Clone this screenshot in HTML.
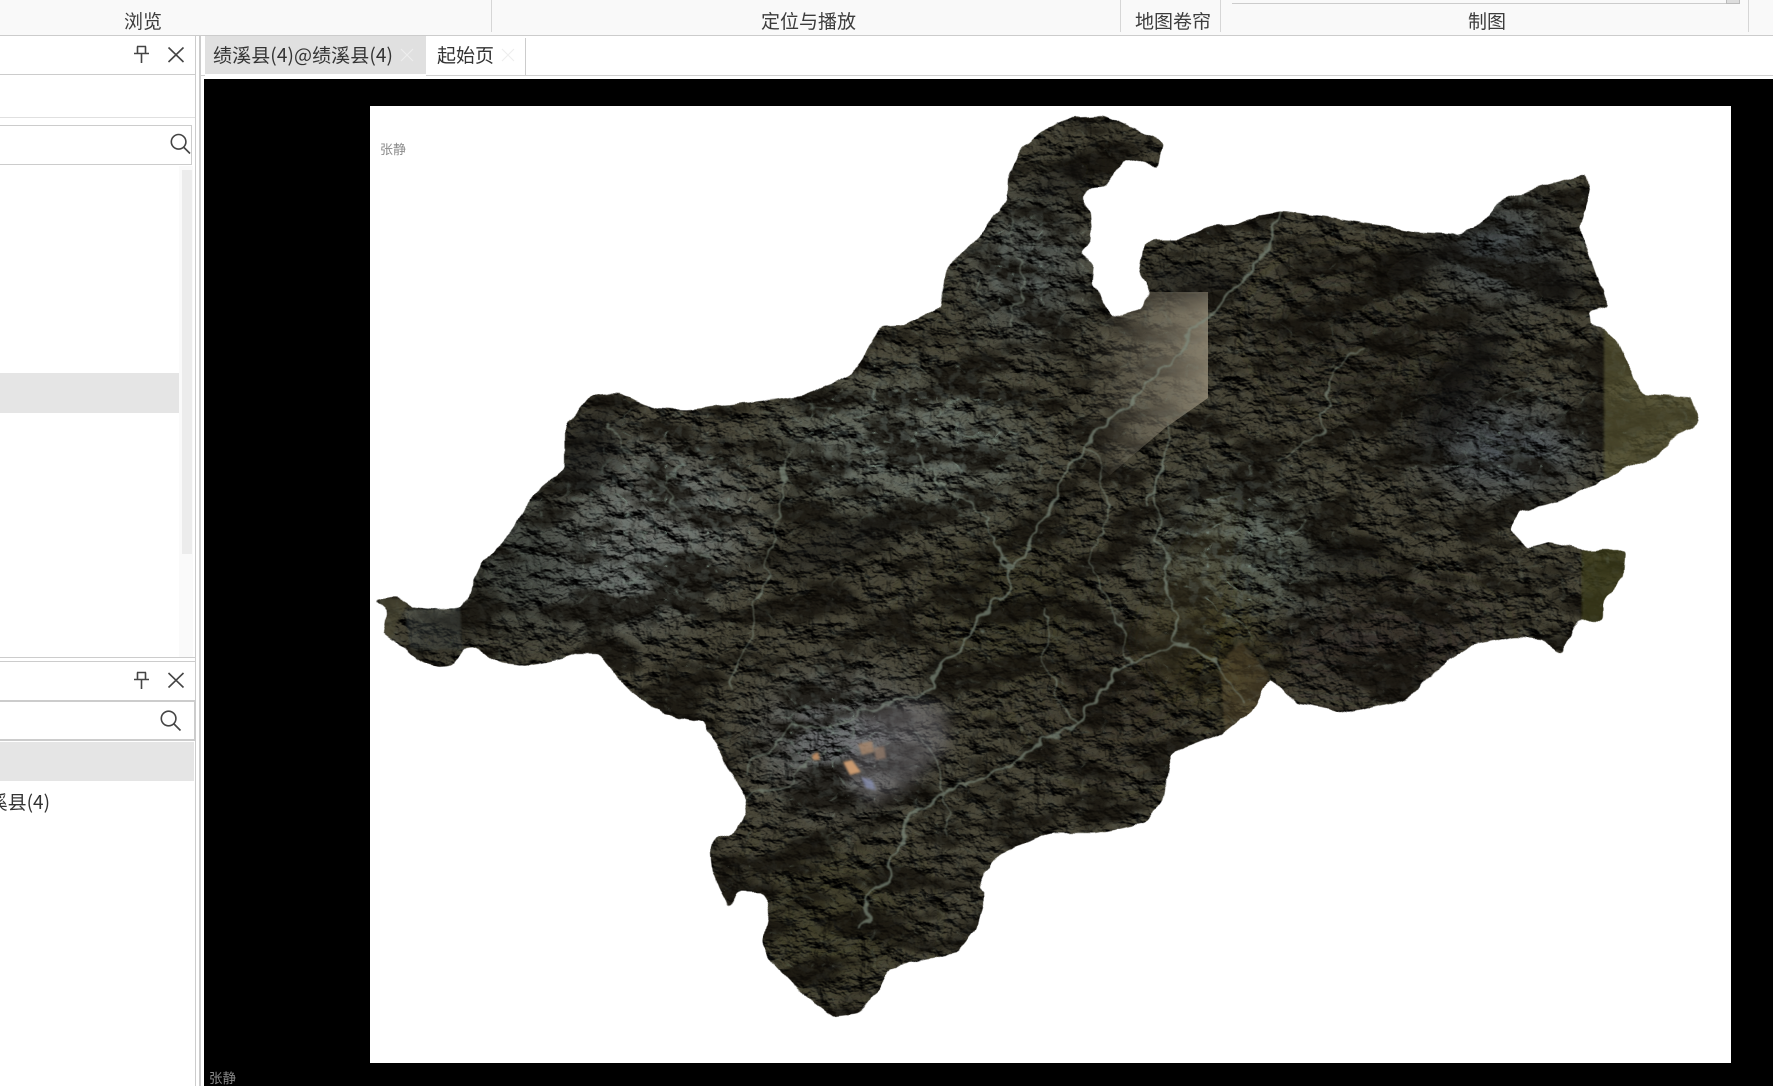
<!DOCTYPE html>
<html lang="zh"><head><meta charset="utf-8"><title>绩溪县</title>
<style>
html,body{margin:0;padding:0;width:1773px;height:1086px;overflow:hidden;background:#fff}
body{position:relative;font-family:"Liberation Sans","Noto Sans CJK SC","WenQuanYi Zen Hei",sans-serif;color:#3c3c3c}
.a{position:absolute}
.t{position:absolute;font-size:19px;line-height:26px;white-space:nowrap;font-family:"Noto Sans CJK SC","WenQuanYi Zen Hei",sans-serif;font-weight:400}
svg{position:absolute;left:0;top:0}
</style></head><body>
<div class="a" style="left:0;top:0;width:1773px;height:35px;background:#f9f9f9;border-bottom:1px solid #ccc"></div>
<div class="a" style="left:491px;top:0;width:1px;height:32px;background:#d6d6d6"></div>
<div class="a" style="left:1120px;top:0;width:1px;height:32px;background:#d6d6d6"></div>
<div class="a" style="left:1220px;top:0;width:1px;height:32px;background:#d6d6d6"></div>
<div class="a" style="left:1748px;top:0;width:1px;height:32px;background:#d6d6d6"></div>
<div class="a" style="left:1232px;top:3px;width:507px;height:1px;background:#ccc"></div>
<div class="a" style="left:1726px;top:0;width:12px;height:3px;background:#ddd;border:1px solid #bbb;border-top:0"></div>
<div class="t" style="left:124px;top:8px">浏览</div>
<div class="t" style="left:761px;top:8px">定位与播放</div>
<div class="t" style="left:1135px;top:8px">地图卷帘</div>
<div class="t" style="left:1468px;top:8px">制图</div>

<!-- left panels -->
<div class="a" style="left:0;top:74px;width:195px;height:1px;background:#ccc"></div>
<div class="a" style="left:0;top:117px;width:195px;height:1px;background:#e0e0e0"></div>
<div class="a" style="left:-2px;top:125px;width:192px;height:38px;border:1px solid #ccc"></div>
<div class="a" style="left:179px;top:166px;width:14px;height:491px;background:#fafafa"></div>
<div class="a" style="left:182px;top:170px;width:10px;height:384px;background:#ececec"></div>
<div class="a" style="left:0;top:373px;width:179px;height:40px;background:#e5e5e5"></div>
<div class="a" style="left:0;top:657px;width:195px;height:1px;background:#ccc"></div>
<div class="a" style="left:0;top:661px;width:195px;height:1px;background:#ccc"></div>
<div class="a" style="left:0;top:700px;width:195px;height:2px;background:#ccc"></div>
<div class="a" style="left:194px;top:700px;width:1px;height:41px;background:#ccc"></div>
<div class="a" style="left:0;top:739px;width:195px;height:2px;background:#ccc"></div>
<div class="a" style="left:0;top:742px;width:194px;height:39px;background:#e5e5e5"></div>
<div class="t" style="right:1723px;top:789px;color:#333">绩溪县(4)</div>
<div class="a" style="left:195px;top:35px;width:1px;height:1051px;background:#ccc"></div>
<div class="a" style="left:199px;top:35px;width:2px;height:1051px;background:#ccc"></div>

<!-- tabs -->
<div class="a" style="left:205px;top:36px;width:221px;height:38px;background:#e0e0e0"></div>
<div class="t" style="left:213px;top:42px;color:#333;letter-spacing:.1px">绩溪县(4)@绩溪县(4)</div>
<div class="a" style="left:426px;top:75px;width:1347px;height:1px;background:#d0d0d0"></div>
<div class="a" style="left:201px;top:75px;width:4px;height:1px;background:#d0d0d0"></div>
<div class="a" style="left:525px;top:38px;width:1px;height:37px;background:#ccc"></div>
<div class="t" style="left:437px;top:42px;color:#333">起始页</div>

<!-- map canvas -->
<div class="a" style="left:204px;top:79px;width:1569px;height:1007px;background:#000"></div>
<div class="a" style="left:370px;top:106px;width:1361px;height:957px;background:#fff"></div>
<div class="a" style="left:380px;top:141px;font-size:13px;line-height:16px;color:#8a8a8a;font-family:'Noto Sans CJK SC',sans-serif;font-weight:400">张静</div>
<div class="a" style="left:209px;top:1069px;font-size:13.5px;line-height:16px;color:#8a8a8a;font-family:'Noto Sans CJK SC',sans-serif;font-weight:400">张静</div>

<svg width="1773" height="1086" viewBox="0 0 1773 1086" xmlns="http://www.w3.org/2000/svg">
<defs>
<linearGradient id="tan" gradientUnits="userSpaceOnUse" x1="1085" y1="0" x2="1208" y2="0">
 <stop offset="0" stop-color="#8a8270" stop-opacity="0"/>
 <stop offset=".55" stop-color="#8a8270" stop-opacity=".5"/>
 <stop offset="1" stop-color="#938a76" stop-opacity=".85"/>
</linearGradient>
<filter id="edge" x="0" y="0" width="100%" height="100%" color-interpolation-filters="sRGB" filterUnits="userSpaceOnUse" primitiveUnits="userSpaceOnUse">
 <feGaussianBlur in="SourceGraphic" stdDeviation="2" result="s"/>
 <feTurbulence type="fractalNoise" baseFrequency="0.06" numOctaves="2" seed="4" result="n"/>
 <feDisplacementMap in="s" in2="n" scale="6" xChannelSelector="R" yChannelSelector="G" result="d"/>
 <feComponentTransfer in="d"><feFuncA type="linear" slope="5" intercept="-2"/></feComponentTransfer>
</filter>
<mask id="land" maskUnits="userSpaceOnUse" x="369" y="106" width="1362" height="957" style="mask-type:alpha">
 <polygon filter="url(#edge)" fill="#fff" points="374,600 397,597 413,606 437,609 460,607 467,600 475,577 483,560 489,557 512,530 534,493 565,467 565,427 592,395 619,393 655,408 686,410 753,402 806,395 851,375 882,327 905,325 940,307 945,270 985,230 995,215 1007,200 1008,177 1020,150 1043,130 1070,118 1103,116 1130,128 1163,142 1158,167 1140,162 1127,158 1113,175 1105,187 1090,188 1082,197 1090,213 1092,240 1080,253 1095,263 1093,283 1108,310 1110,318 1143,308 1150,290 1140,273 1145,243 1153,240 1177,240 1213,226 1233,225 1260,215 1283,211 1330,217 1378,225 1415,232 1458,234 1481,225 1500,201 1533,189 1585,174 1590,194 1580,229 1597,277 1609,306 1590,312 1592,325 1606,329 1618,343 1642,394 1691,398 1700,422 1670,439 1660,456 1637,463 1609,477 1561,501 1519,512 1510,529 1528,548 1552,542 1580,550 1625,550 1623,577 1604,601 1604,620 1578,620 1560,655 1543,639 1514,637 1472,646 1439,667 1406,700 1350,713 1297,703 1270,678 1253,710 1224,733 1172,753 1162,803 1145,823 1096,833 1052,833 1012,848 991,862 979,887 985,895 976,930 958,953 922,960 891,968 878,990 860,1013 833,1017 802,993 770,960 762,943 770,907 764,893 739,892 729,908 721,893 712,870 710,847 717,838 735,833 746,813 744,797 730,770 720,752 707,730 703,723 680,718 663,713 637,697 617,677 608,663 598,654 577,654 547,662 523,666 500,663 488,657 475,647 465,648 458,658 450,666 440,667 423,663 410,655 402,647 383,633 387,612"/>
</mask>
<filter id="b30" x="-30%" y="-30%" width="160%" height="160%"><feGaussianBlur stdDeviation="26"/></filter>
<filter id="b12" x="-30%" y="-30%" width="160%" height="160%"><feGaussianBlur stdDeviation="12"/></filter>
<filter id="b6" x="-20%" y="-20%" width="140%" height="140%"><feGaussianBlur stdDeviation="7"/></filter>
<filter id="b1" x="-5%" y="-5%" width="110%" height="110%"><feGaussianBlur stdDeviation="1"/></filter>
<filter id="rv" filterUnits="userSpaceOnUse" x="369" y="106" width="1362" height="957" color-interpolation-filters="sRGB">
 <feTurbulence type="fractalNoise" baseFrequency="0.035" numOctaves="3" seed="9" result="n"/>
 <feDisplacementMap in="SourceGraphic" in2="n" scale="26" xChannelSelector="R" yChannelSelector="G"/>
 <feGaussianBlur stdDeviation="0.7"/>
</filter>
<filter id="relief" x="0" y="0" width="100%" height="100%" color-interpolation-filters="sRGB">
 <feTurbulence type="fractalNoise" baseFrequency="0.045 0.06" numOctaves="4" seed="11"/>
 <feColorMatrix values="0 0 0 0 0  0 0 0 0 0  0 0 0 0 0  1 0 0 0 0"/>
 <feDiffuseLighting surfaceScale="10" diffuseConstant="1.0" lighting-color="#fff"><feDistantLight azimuth="300" elevation="52"/></feDiffuseLighting>
</filter>
<filter id="ridge" x="0" y="0" width="100%" height="100%" color-interpolation-filters="sRGB">
 <feTurbulence type="fractalNoise" baseFrequency="0.014 0.032" numOctaves="3" seed="21"/>
 <feColorMatrix values="0 0 0 0 .07  0 0 0 0 .06  0 0 0 0 .04  6 0 0 0 -2.8"/>
</filter>
<filter id="veins" x="0" y="0" width="100%" height="100%" color-interpolation-filters="sRGB">
 <feTurbulence type="turbulence" baseFrequency="0.024 0.03" numOctaves="3" seed="5"/>
 <feColorMatrix values="0 0 0 0 .50  0 0 0 0 .57  0 0 0 0 .52  -10 0 0 0 1.05"/>
</filter>
<filter id="speck" x="0" y="0" width="100%" height="100%" color-interpolation-filters="sRGB">
 <feTurbulence type="fractalNoise" baseFrequency="0.09 0.11" numOctaves="3" seed="3"/>
 <feColorMatrix values="0 0 0 0 .44  0 0 0 0 .49  0 0 0 0 .47  6 0 0 0 -3.0"/>
</filter>
<mask id="lightz" maskUnits="userSpaceOnUse" x="369" y="106" width="1362" height="957">
 <rect x="369" y="106" width="1362" height="957" fill="#444"/>
 <g filter="url(#b30)" fill="#fff">
  <ellipse cx="660" cy="510" rx="95" ry="85"/>
  <ellipse cx="915" cy="440" rx="125" ry="65"/>
  <ellipse cx="1020" cy="265" rx="50" ry="55"/>
  <ellipse cx="1240" cy="550" rx="70" ry="80"/>
  <ellipse cx="840" cy="740" rx="70" ry="50"/>
  <ellipse cx="1500" cy="440" rx="80" ry="40"/>
 </g>
</mask>
</defs>

<g mask="url(#land)">
 <rect x="369" y="106" width="1362" height="957" fill="#4a4738"/>
 <!-- broad tonal regions -->
 <g filter="url(#b30)">
  <ellipse cx="660" cy="520" rx="90" ry="75" fill="#6f736d"/>
  <ellipse cx="620" cy="590" rx="70" ry="35" fill="#6e7571"/>
  <ellipse cx="900" cy="450" rx="125" ry="60" fill="#696e63"/>
  <ellipse cx="1030" cy="270" rx="55" ry="70" fill="#585d58"/>
  <ellipse cx="1240" cy="560" rx="75" ry="80" fill="#5f665c"/>
  <ellipse cx="840" cy="740" rx="80" ry="55" fill="#707274"/>
  <ellipse cx="1010" cy="610" rx="80" ry="70" fill="#403c2c"/>
  <ellipse cx="830" cy="920" rx="75" ry="70" fill="#43402c"/>
  <ellipse cx="1340" cy="330" rx="70" ry="55" fill="#363327"/>
  <ellipse cx="1500" cy="250" rx="60" ry="50" fill="#4c5256"/>
  <ellipse cx="1500" cy="450" rx="85" ry="35" fill="#58626c"/>
  <ellipse cx="1450" cy="400" rx="40" ry="60" fill="#2d2a22"/>
  <ellipse cx="1360" cy="640" rx="130" ry="45" fill="#39322a"/>
  <ellipse cx="1220" cy="640" rx="50" ry="70" fill="#454124"/>
  <ellipse cx="1120" cy="700" rx="70" ry="60" fill="#3c392c"/>
  <ellipse cx="520" cy="560" rx="60" ry="70" fill="#474c45"/>
 </g>
 <!-- hillshade -->
 <rect x="369" y="106" width="1362" height="957" filter="url(#relief)" style="mix-blend-mode:multiply"/>
 <rect x="369" y="106" width="1362" height="957" filter="url(#ridge)" opacity=".75"/>
 <!-- scene mosaics -->
 <polygon points="1085,340 1130,300 1150,292 1208,292 1208,398 1165,428 1110,475 1078,450" fill="url(#tan)"/>
 <g filter="url(#b1)">
  <polygon points="1604,320 1660,340 1720,390 1710,440 1650,470 1604,490" fill="#5f5e36" opacity=".6"/>
  <polygon points="1582,550 1630,545 1630,580 1606,625 1582,625" fill="#3f3c1c" opacity=".75"/>
  <polygon points="374,596 410,600 396,625 392,640 380,632 388,612" fill="#4c4935" opacity=".75"/>
  <polygon points="405,610 460,605 462,650 410,648" fill="#6f7c7d" opacity=".25"/>
  <polygon points="1220,665 1240,640 1270,675 1255,715 1225,735" fill="#5c4f30" opacity=".5"/>
 </g>
 <g filter="url(#b6)"><polygon points="1130,640 1170,560 1215,500 1240,500 1225,620 1170,700" fill="#4b4830" opacity=".3"/></g>
 <!-- valley network and speckle -->
 <rect x="369" y="106" width="1362" height="957" filter="url(#veins)" mask="url(#lightz)" opacity=".8"/>
 <rect x="369" y="106" width="1362" height="957" filter="url(#speck)" mask="url(#lightz)" opacity=".35"/>
 <!-- dark shadows -->
 <g filter="url(#b12)" fill="#0e0c08" opacity=".55">
  <ellipse cx="590" cy="450" rx="30" ry="45" transform="rotate(25 590 450)"/>
  <ellipse cx="1190" cy="280" rx="55" ry="14"/>
  <ellipse cx="835" cy="545" rx="70" ry="16" transform="rotate(-20 835 545)"/>
  <ellipse cx="1460" cy="385" rx="25" ry="75" transform="rotate(35 1460 385)"/>
  <ellipse cx="1340" cy="560" rx="55" ry="12"/>
  <ellipse cx="1060" cy="180" rx="40" ry="12" transform="rotate(-25 1060 180)"/>
  <ellipse cx="1430" cy="260" rx="60" ry="12" transform="rotate(-20 1430 260)"/>
  <ellipse cx="1560" cy="285" rx="25" ry="18"/>
  <ellipse cx="440" cy="640" rx="30" ry="9"/>
 </g>
 <!-- rivers -->
 <g filter="url(#rv)" fill="none" stroke="#7f8c7e" stroke-linecap="round" stroke-linejoin="round" opacity=".7">
  <path stroke-width="2.8" d="M1280,205 1266,246 1243,284 1200,325 1144,387 1124,406 1089,443 1060,483 1049,519 1007,569 999,599 971,633 939,673 932,693"/>
  <path stroke-width="2" d="M932,693 878,708 838,721 788,731 748,776"/>
  <path stroke-width="2.6" d="M1185,639 1128,666 1085,706 1082,726 1021,756 985,776 928,803 897,843 888,879 861,926"/>
  <path stroke-width="2" d="M1148,508 1167,422 1153,491 1177,636 1214,663 1250,701"/>
  <path stroke-width="1.7" d="M1361,349 1328,370 1328,422 1278,466"/>
  <path stroke-width="1.7" d="M1007,569 988,521 948,491 918,456"/>
  <path stroke-width="1.5" d="M1089,443 1108,506 1093,576 1118,626 1133,666"/>
  <path stroke-width="1.5" d="M790,456 773,546 760,606 728,686"/>
  <path stroke-width="1.5" d="M948,836 938,766 918,726"/>
  <path stroke-width="1.5" d="M1048,606 1038,656 1063,696 1082,726"/>
  <path stroke-width="1.5" d="M723,821 778,786 828,746"/>
  <path stroke-width="1.3" d="M1008,216 1028,276 1008,326"/>
  <path stroke-width="1.3" d="M608,426 678,506 708,566"/>
 </g>
 <!-- town -->
 <g filter="url(#b6)"><polygon points="862,715 905,700 945,705 950,745 905,790 870,805 845,780 850,740" fill="#85838a" opacity=".4"/></g>
 <g filter="url(#b1)">
  <polygon points="843,762 852,760 861,772 850,775" fill="#c99a70"/>
  <polygon points="858,744 872,741 874,752 862,755" fill="#a8876c" opacity=".8"/>
  <polygon points="874,748 884,746 886,758 876,760" fill="#a08470" opacity=".65"/>
  <polygon points="812,755 818,752 820,760 813,760" fill="#b98a62"/>
  <polygon points="861,777 872,780 876,790 866,788" fill="#8a90b0" opacity=".8"/>
 </g>
</g>

<!-- icons -->
<g fill="none" stroke="#444" stroke-width="1.6">
 <path d="M137,46.5H146M137.5,46.5V53M145.5,46.5V53M134,53.5H149M141.5,53.5V63"/>
 <path d="M168.5,47.5 183.5,62M183.5,47.5 168.5,62"/>
 <path d="M137,672.5H146M137.5,672.5V679M145.5,672.5V679M134,679.5H149M141.5,679.5V689"/>
 <path d="M168.5,673 183.5,687.5M183.5,673 168.5,687.5"/>
 <circle cx="178.6" cy="141.8" r="7.3"/><path d="M184,147.5 190,153.5"/>
 <circle cx="168.6" cy="718.5" r="7.3"/><path d="M174,724 180.5,730.5"/>
</g>
<g fill="none" stroke="#eeeeee" stroke-width="1.1">
 <path d="M401,49 413,61M413,49 401,61"/>
 <path d="M502,49 514,61M514,49 502,61"/>
</g>
</svg>
</body></html>
